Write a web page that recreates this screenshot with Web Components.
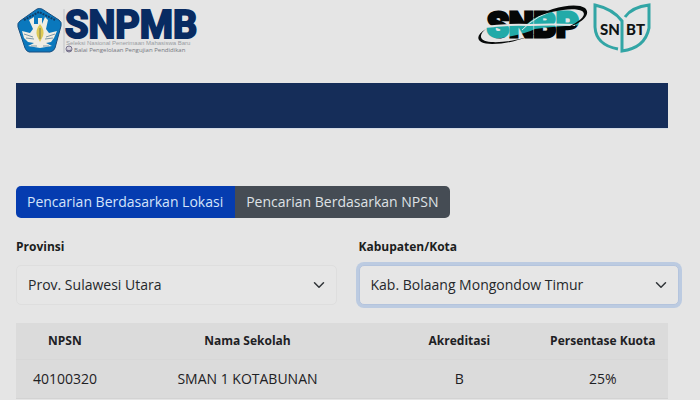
<!DOCTYPE html>
<html lang="id">
<head>
<meta charset="utf-8">
<meta name="viewport" content="width=device-width, initial-scale=1">
<title>SNPMB</title>
<style>
  body {
    margin: 0;
    background: #e5e5e5;
    color: #1e2124;
    font: 14px/20px "Open Sans", "Noto Sans", sans-serif;
  }

  main {
    padding: 0 21px 0 16px;
  }

  .filters {
    display: grid;
    grid-template-columns: 1fr 1fr;
    gap: 22px;
    margin: 19px 0 18px;
  }

  page-banner,
  school-table {
    margin-right: 11px;
  }
</style>
</head>
<body>

<site-header></site-header>
<main>
  <page-banner></page-banner>
  <search-tabs>
    <search-tab active>Pencarian Berdasarkan Lokasi</search-tab>
    <search-tab>Pencarian Berdasarkan NPSN</search-tab>
  </search-tabs>
  <div class="filters">
    <select-field label="Provinsi" value="Prov. Sulawesi Utara"></select-field>
    <select-field label="Kabupaten/Kota" value="Kab. Bolaang Mongondow Timur" highlighted></select-field>
  </div>
  <school-table></school-table>
</main>

<script>
function attach(element, html) {
  const template = document.createElement("template");
  template.innerHTML = html;
  element.attachShadow({ mode: "open" });
  element.shadowRoot.appendChild(template.content.cloneNode(true));
}

class SiteHeader extends HTMLElement {
  constructor() {
    super();
    attach(this, `
<style>
  :host {
    display: flex;
    justify-content: space-between;
    padding: 0 44px 0 16px;
  }

  svg {
    display: block;
    height: 60px;
  }
</style>
<svg width="184" viewBox="16 0 184 60" role="img" aria-label="SNPMB">
  <path d="M37 9 Q39 8 42 9 L59 20 Q62 22 61 26 L55 48 Q54 51 50 52 H29 Q26 51 25 48 L18 27 Q17 23 20 21 Z" fill="#0a78bd" stroke="#1a4f80"/>
  <path d="M24 20 L39 12 L55 20" fill="none" stroke="#123e68" stroke-width="2" stroke-dasharray="2 1"/>
  <path d="M29 20 L34 17 L34 24 L38 24 L38 18 L42 18 L42 24 L45 17 L48 20 L46 29 L49 33 L57 31 L54 38 L51 42 L46 43 L52 46 L40 48 L28 46 L34 43 L28 42 L24 38 L22 31 L30 33 L33 29 Z" fill="#f0ede3"/>
  <path d="M24 34 l9 3 M26 38 l8 1 M55 34 l-9 3 M53 38 l-8 1 M31 46 h6 M43 46 h6" stroke="#7d98a8" fill="none"/>
  <path d="M40 24 Q45 30 43 36 L40 42 L37 36 Q35 30 40 24Z" fill="#ddca55"/>
  <path d="M40 28 v11" stroke="#777952"/>
  <path d="M64 9 V53" stroke="#bfc1c5"/>
  <text x="65" y="38" font-family="Roboto, sans-serif" font-size="38" font-weight="700" fill="#082b62" stroke="#082b62" stroke-width="2">SNPMB</text>
  <text x="66" y="45" font-family="Liberation Sans, sans-serif" font-size="6" fill="#999da3">Seleksi Nasional Penerimaan Mahasiswa Baru</text>
  <circle cx="69" cy="49" r="3" fill="#d5d1da" stroke="#77738d"/>
  <path d="M67 50 q2 2 4 0" stroke="#625b7c" fill="none"/>
  <text x="74" y="52" font-family="Open Sans, sans-serif" font-size="6" fill="#74777e">Balai Pengelolaan Pengujian Pendidikan</text>
</svg>
<svg width="180" viewBox="476 0 180 60" role="img" aria-label="SNBP dan SNBT">
  <defs>
    <pattern id="split" patternUnits="userSpaceOnUse" x="470" y="0" width="130" height="60">
      <rect width="130" height="60" fill="#050707"/>
      <path d="M0 27 Q32 25 57 24 Q73 10 99 7 H130 V25 Q93 25 65 29 Q48 37 8 41 H0 Z" fill="#22aaa8"/>
    </pattern>
  </defs>
  <text x="487" y="37" font-family="Roboto, sans-serif" font-size="35" font-weight="900" fill="url(#split)" stroke="url(#split)" stroke-width="3">SNBP</text>
  <path d="M484 27 Q508 24 530 25 Q550 24 575 25" fill="none" stroke="#e5e5e5" stroke-width="2"/>
  <path d="M522 30 Q537 14 560 9" fill="none" stroke="#e5e5e5"/>
  <path d="M486 29 C474 36 476 44 492 44 C513 44 529 36 543 31 C528 38 508 43 491 42 C478 41 479 34 486 29Z" fill="#070909"/>
  <path d="M531 19 C550 7 576 2 585 8 C593 16 577 25 566 28 C579 22 588 15 582 11 C574 7 552 10 531 19Z" fill="#070909"/>
  <path d="M618 49 Q596 45 595 27 V5 Q613 9 622 21 V51 Q645 48 649 28 V5 Q632 7 625 17" fill="none" stroke="#32a5a5" stroke-width="3"/>
  <text font-family="Lato, sans-serif" font-size="15" font-weight="900" fill="#101414"><tspan x="600" y="35">SN</tspan><tspan x="626" y="35">BT</tspan></text>
</svg>`);
  }
}

class PageBanner extends HTMLElement {
  constructor() {
    super();
    attach(this, `
<style>
  :host {
    display: block;
    height: 45px;
    margin-top: 23px;
    margin-bottom: 57px;
    background: #152d59;
    border-bottom: 1px solid #d3dbe6;
  }
</style>`);
  }
}

class SearchTabs extends HTMLElement {
  constructor() {
    super();
    attach(this, `
<style>
  :host {
    display: flex;
  }

  div {
    display: flex;
    overflow: hidden;
    border-radius: 5px;
  }
</style>
<div><slot></slot></div>`);
  }
}

class SearchTab extends HTMLElement {
  constructor() {
    super();
    attach(this, `
<style>
  :host {
    display: block;
  }

  button {
    display: block;
    margin: 0;
    padding: 6px 12px 6px 11px;
    border: 0;
    background: #454c54;
    color: #dfe2e5;
    font: inherit;
    white-space: nowrap;
    cursor: pointer;
  }

  :host([active]) button {
    background: #053cb0;
    color: #d5e4fa;
  }
</style>
<button type="button"><slot></slot></button>`);
  }
}

class SelectField extends HTMLElement {
  constructor() {
    super();
    attach(this, `
<style>
  :host {
    display: block;
    min-width: 0;
  }

  label {
    display: block;
    margin-bottom: 8px;
    font-size: 12px;
    font-weight: 700;
    color: #1b1d20;
  }

  .box {
    display: grid;
    align-items: center;
  }

  select,
  svg {
    grid-area: 1 / 1;
  }

  select {
    appearance: none;
    width: 100%;
    height: 40px;
    padding: 0 36px 0 11px;
    border: 1px solid #dedede;
    border-radius: 5px;
    outline: 0;
    background: #e6e6e6;
    color: #25282b;
    font: inherit;
  }

  svg {
    justify-self: end;
    margin-right: 12px;
    pointer-events: none;
  }

  :host([highlighted]) select {
    border-color: #b4c4dd;
    box-shadow: 0 0 0 3px #bccbe1;
  }
</style>
<label for="choice"></label>
<div class="box">
  <select id="choice"><option></option></select>
  <svg width="12" height="12" viewBox="0 0 16 16" fill="none" stroke="#303438" stroke-width="2" stroke-linecap="round" stroke-linejoin="round"><path d="m2 5 6 6 6-6"/></svg>
</div>`);
  }

  connectedCallback() {
    this.shadowRoot.querySelector("label").textContent = this.getAttribute("label");
    this.shadowRoot.querySelector("option").textContent = this.getAttribute("value");
  }
}

class SchoolTable extends HTMLElement {
  constructor() {
    super();
    attach(this, `
<style>
  :host {
    display: block;
  }

  table {
    width: 100%;
    table-layout: fixed;
    border-collapse: collapse;
    background: #dbdbdb;
    text-align: center;
  }

  th {
    padding: 8px 0;
    font-size: 12px;
    font-weight: 700;
  }

  td {
    padding: 9px 0;
    border-top: 1px solid #d7d7d7;
    border-bottom: 1px solid #d3d3d3;
  }
</style>
<table>
  <colgroup>
    <col style="width: 15%">
    <col style="width: 41%">
    <col style="width: 24%">
    <col style="width: 20%">
  </colgroup>
  <thead>
    <tr><th>NPSN</th><th>Nama Sekolah</th><th>Akreditasi</th><th>Persentase Kuota</th></tr>
  </thead>
  <tbody>
    <tr><td>40100320</td><td>SMAN 1 KOTABUNAN</td><td>B</td><td>25%</td></tr>
  </tbody>
</table>`);
  }
}

window.customElements.define("site-header", SiteHeader);
window.customElements.define("page-banner", PageBanner);
window.customElements.define("search-tabs", SearchTabs);
window.customElements.define("search-tab", SearchTab);
window.customElements.define("select-field", SelectField);
window.customElements.define("school-table", SchoolTable);
</script>
</body>
</html>
